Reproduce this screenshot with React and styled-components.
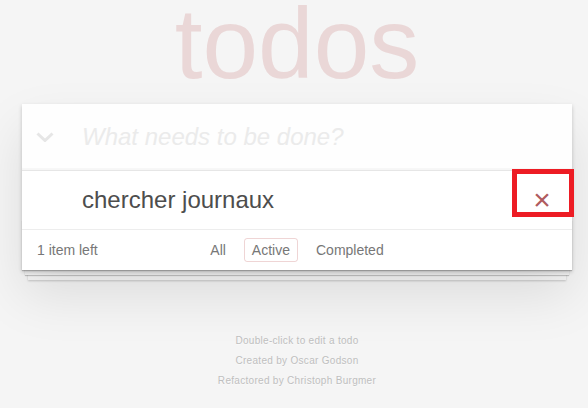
import styled, { createGlobalStyle } from "styled-components";

const GlobalStyle = createGlobalStyle`
  html, body {
    margin: 0;
    padding: 0;
  }
  body {
    background: #f5f5f5;
    font: 14px "Liberation Sans", Helvetica, Arial, sans-serif;
    line-height: 1.4em;
    color: #4d4d4d;
    font-weight: 300;
  }
`;

const Page = styled.div`
  max-width: 550px;
  min-width: 230px;
  margin: 0 auto;
  padding-left: 6px;
`;

const Title = styled.h1`
  margin: 0 0 18px;
  font-size: 100px;
  line-height: 86px;
  font-weight: 100;
  text-align: center;
  color: rgba(175, 47, 47, 0.15);
`;

const Card = styled.section`
  position: relative;
  background: #fff;
  box-shadow: 0 2px 4px 0 rgba(0, 0, 0, 0.2), 0 25px 50px 0 rgba(0, 0, 0, 0.1);
`;

const NewTodoBar = styled.header`
  display: flex;
  align-items: center;
  background: rgba(0, 0, 0, 0.003);
  box-shadow: inset 0 -2px 1px rgba(0, 0, 0, 0.03);
`;

const ToggleAll = styled.label`
  width: 60px;
  flex-shrink: 0;
  display: flex;
  align-items: center;
  padding-left: 14px;
  box-sizing: border-box;
  color: #e6e6e6;
`;

const NewTodo = styled.input`
  flex: 1;
  min-width: 0;
  padding: 16px 16px 16px 0;
  border: none;
  outline: none;
  background: transparent;
  font-family: inherit;
  font-size: 24px;
  line-height: 1.4em;
  color: inherit;

  &::placeholder {
    font-style: italic;
    font-weight: 300;
    color: #ebebeb;
  }
`;

const TodoList = styled.ul`
  margin: 0;
  padding: 0;
  list-style: none;
  border-top: 1px solid #e6e6e6;
`;

const TodoItem = styled.li`
  position: relative;
  display: flex;
  align-items: center;
  font-size: 24px;
  border-bottom: 1px solid #ededed;
`;

const TodoLabel = styled.label`
  flex: 1;
  padding: 15px 15px 15px 60px;
  line-height: 1.2;
  word-break: break-all;
`;

const Destroy = styled.button`
  width: 40px;
  height: 40px;
  margin: 0 10px 0 0;
  padding: 0;
  border: 0;
  background: none;
  font-family: inherit;
  font-size: 30px;
  line-height: 37px;
  color: #af5b5e;
  cursor: pointer;
`;

const Highlight = styled.div`
  position: absolute;
  top: -2px;
  right: -2px;
  width: 62px;
  height: 48px;
  box-sizing: border-box;
  border: 5px solid #ed1c24;
  pointer-events: none;
`;

const Footer = styled.footer`
  position: relative;
  display: grid;
  grid-template-columns: 1fr auto 1fr;
  align-items: center;
  height: 20px;
  padding: 10px 15px;
  color: #777;

  &::before {
    content: "";
    position: absolute;
    right: 0;
    bottom: 0;
    left: 0;
    height: 50px;
    overflow: hidden;
    z-index: -1;
    box-shadow: 0 1px 1px rgba(0, 0, 0, 0.2),
      0 8px 0 -3px #f6f6f6,
      0 9px 1px -3px rgba(0, 0, 0, 0.2),
      0 16px 0 -6px #f6f6f6,
      0 17px 2px -6px rgba(0, 0, 0, 0.2);
  }
`;

const Count = styled.span`
  justify-self: start;
`;

const Filters = styled.ul`
  display: flex;
  align-items: center;
  gap: 4px;
  height: 20px;
  margin: 0;
  padding: 0;
  list-style: none;
`;

const FilterLink = styled.a`
  display: block;
  margin: 0 3px;
  padding: 3px 7px;
  line-height: 16px;
  color: inherit;
  text-decoration: none;
  border: 1px solid ${(p) => (p.$selected ? "rgba(175, 47, 47, 0.2)" : "transparent")};
  border-radius: 3px;
`;

const Info = styled.footer`
  margin: 66px auto 0;
  color: #bfbfbf;
  font-size: 10px;
  letter-spacing: 0.3px;
  text-shadow: 0 1px 0 rgba(255, 255, 255, 0.5);
  text-align: center;

  p {
    margin: 10px 0;
    line-height: 1;
  }
`;

const Chevron = () => (
  <svg width="18" height="10" viewBox="0 0 18 10">
    <polyline
      points="1.5,1.5 9,8.5 16.5,1.5"
      fill="none"
      stroke="currentColor"
      strokeWidth="3"
    />
  </svg>
);

const filters = ["All", "Active", "Completed"];

export default function App() {
  return (
    <Page>
      <GlobalStyle />
      <Title>todos</Title>
      <Card>
        <NewTodoBar>
          <ToggleAll>
            <Chevron />
          </ToggleAll>
          <NewTodo placeholder="What needs to be done?" />
        </NewTodoBar>
        <TodoList>
          <TodoItem>
            <TodoLabel>chercher journaux</TodoLabel>
            <Destroy>×</Destroy>
            <Highlight />
          </TodoItem>
        </TodoList>
        <Footer>
          <Count>1 item left</Count>
          <Filters>
            {filters.map((f) => (
              <li key={f}>
                <FilterLink href="#" $selected={f === "Active"}>
                  {f}
                </FilterLink>
              </li>
            ))}
          </Filters>
        </Footer>
      </Card>
      <Info>
        <p>Double-click to edit a todo</p>
        <p>Created by Oscar Godson</p>
        <p>Refactored by Christoph Burgmer</p>
      </Info>
    </Page>
  );
}
